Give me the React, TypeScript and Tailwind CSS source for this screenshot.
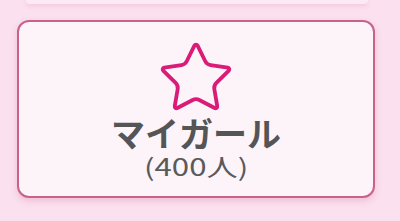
import { Star } from "lucide-react";

export default function App() {
  return (
    <div className="h-[221px] w-[400px] overflow-hidden bg-[#fbe0ef] font-['Noto_Sans_CJK_JP','Noto_Sans',sans-serif]">
      <div className="ml-[26px] h-[4px] w-[342px] rounded-b-[10px] bg-[#fde9f4] shadow-[0_2px_4px_rgba(220,120,170,0.25)]" />
      <div className="ml-[17px] mt-[16px] flex h-[178px] w-[358px] flex-col items-center rounded-[12px] border-2 border-[#c9628a] bg-[#fdf4fa] shadow-[0_3px_6px_rgba(200,90,140,0.25)]">
        <Star
          size={80}
          strokeWidth={1.15}
          className="mt-[16px] text-[#d91c77]"
        />
        <div className="-mt-[3px] text-[34px] font-bold leading-[36px] text-[#555555]">
          マイガール
        </div>
        <div className="mt-[2px] inline-block scale-x-[1.3] text-[24px] leading-[26px] text-[#5a5a5a]">
          (400人)
        </div>
      </div>
    </div>
  );
}
